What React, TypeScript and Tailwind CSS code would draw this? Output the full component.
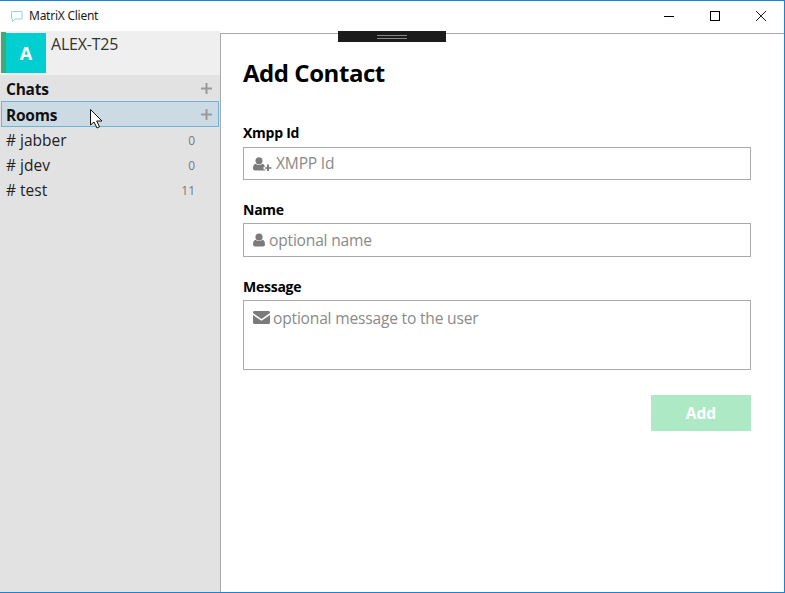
const font = "font-['Open_Sans','Noto_Sans',sans-serif]";

function ChatGlyph() {
  return (
    <svg width="13" height="13" viewBox="0 0 13 13" fill="none" stroke="#8fd3ee" strokeWidth="1">
      <path d="M1.500 1.500h10.500v7.500h-7l-2.500 2.500v-2.500h-1z" />
    </svg>
  );
}

function UserIcon() {
  return (
    <svg width="12" height="14" viewBox="0 0 12 14" fill="#7b7b7b" className="shrink-0">
      <circle cx="6" cy="4" r="3.600" />
      <path d="M2.500 6.800c1 1.300 6 1.300 7 0 1.500.5 2.500 2 2.500 4.500 0 1.500-1 2.200-2 2.200h-8c-1 0-2-.7-2-2.200 0-2.500 1-4 2.500-4.500z" />
    </svg>
  );
}

function UserPlusIcon() {
  return (
    <svg width="19" height="14" viewBox="0 0 19 14" fill="#7b7b7b" className="shrink-0">
      <circle cx="6" cy="3.800" r="3.500" />
      <path d="M2.500 6.800c1 1.300 6 1.300 7 0 1.300.4 2.200 1.500 2.400 3.200h-1.400v2.500h2v1h-10.500c-1 0-2-.7-2-2.200 0-2.500 1-4 2.500-4.500z" />
      <path d="M14 7.500h2v2.700h2.500v1.600h-2.500v2.200h-2v-2.200h-2v-1.600h2z" />
    </svg>
  );
}

function EnvelopeIcon() {
  return (
    <svg width="17" height="13" viewBox="0 0 17 13" fill="#7b7b7b" className="mr-[-1px] shrink-0">
      <path d="M1.500 0h14c.9 0 1.500.6 1.500 1.500v.6l-8.500 5.900-8.500-5.900v-.6c0-.9.6-1.500 1.500-1.500z" />
      <path d="M0 4l8.500 5.800 8.500-5.800v7.500c0 .9-.6 1.500-1.500 1.500h-14c-.9 0-1.500-.6-1.500-1.500z" />
    </svg>
  );
}

function TitleBar() {
  return (
    <div className="flex h-[30px] items-center bg-white">
      <div className="ml-[10px] flex items-center gap-[6px]">
        <ChatGlyph />
        <span className="text-[12px] text-[#1a1a1a] font-['Noto_Sans',sans-serif] tracking-[-0.25px]">MatriX Client</span>
      </div>
      <div className="ml-auto flex items-center">
        <svg width="46" height="30" viewBox="0 0 46 30" stroke="#000" fill="none">
          <path d="M18 15.500h10" />
        </svg>
        <svg width="46" height="30" viewBox="0 0 46 30" stroke="#000" fill="none">
          <rect x="18.500" y="10.500" width="9" height="9" />
        </svg>
        <svg width="46" height="30" viewBox="0 0 46 30" stroke="#222" fill="none">
          <path d="M18 10l10 10M28 10l-10 10" />
        </svg>
      </div>
    </div>
  );
}

function RoomRow({ name, count }: { name: string; count: string }) {
  return (
    <div className="flex h-[25px] items-center pl-[6px] pr-[25px] text-[15.500px] text-[#222]">
      <span className="flex-1 whitespace-pre"># {name}</span>
      <span className="text-[12px] text-[#778]">{count}</span>
    </div>
  );
}

function SectionRow({ label, active }: { label: string; active?: boolean }) {
  return (
    <div
      className={
        active
          ? "flex h-[26px] items-center border border-[#6cb4dc] bg-[#ccdbe3] pl-[4px] pr-[6px]"
          : "flex h-[25px] items-center border border-transparent pl-[4px] pr-[6px]"
      }
    >
      <span className="flex-1 pt-[3px] text-[15.500px] font-bold text-[#111] tracking-[-0.25px]">{label}</span>
      <svg width="11" height="11" viewBox="0 0 11 11" stroke="#9a9a9a" strokeWidth="2" fill="none">
        <path d="M5.500 0v11M0 5.500h11" />
      </svg>
    </div>
  );
}

function Sidebar() {
  return (
    <div className="flex w-[220px] shrink-0 flex-col bg-[#e2e2e2]">
      <div className="flex h-[44px] items-start bg-[#efefef] pt-[1px] pl-[1px]">
        <div className="h-[41px] w-[5px] bg-[#3cab74]" />
        <div className="mt-[1px] flex h-[40px] w-[40px] items-center justify-center bg-[#00ced1] text-[18px] font-bold text-white">
          A
        </div>
        <span className="ml-[5px] text-[16px] leading-[24px] text-[#333] tracking-[-0.2px]">ALEX-T25</span>
      </div>
      <div className="mt-[1px] pl-[1px] pr-[1px]">
        <SectionRow label="Chats" />
        <SectionRow label="Rooms" active />
      </div>
      <div className="mt-[1px]">
        <RoomRow name="jabber" count="0" />
        <RoomRow name="jdev" count="0" />
        <RoomRow name="test" count="11" />
      </div>
    </div>
  );
}

function Field({ label, icon, placeholder, className, textClass }: { label: string; icon: React.ReactNode; placeholder: string; className: string; textClass?: string }) {
  return (
    <div>
      <div className="text-[14px] leading-[18px] font-bold text-black tracking-[-0.25px]">{label}</div>
      <div className={"flex gap-[4px] border border-[#aaa] bg-white pl-[9px] text-[15.600px] text-[#8a8a8a] tracking-[-0.2px] " + className}>
        {icon}
        <span className={textClass}>{placeholder}</span>
      </div>
    </div>
  );
}

export default function App() {
  return (
    <div className={"relative flex h-[593px] w-[785px] flex-col overflow-hidden border-t border-r border-b border-[#1883d7] bg-white " + font}>
      <TitleBar />
      <div className="flex flex-1 overflow-hidden">
        <Sidebar />
        <div className="mt-[2px] flex flex-1 flex-col border-t border-l border-[#aaa] pr-[33px] pl-[22px]">
          <h1 className="mt-[22px] text-[24px] leading-[34px] font-bold text-black tracking-[-0.45px]">Add Contact</h1>
          <div className="mt-[34px] flex flex-col gap-[21px]">
            <Field
              label="Xmpp Id"
              placeholder="XMPP Id"
              className="mt-[5px] h-[33px] items-center"
              icon={<UserPlusIcon />}
            />
            <Field
              label="Name"
              placeholder="optional name"
              className="mt-[4px] h-[34px] items-center"
              textClass="pt-[2px]"
              icon={<UserIcon />}
            />
            <Field
              label="Message"
              placeholder="optional message to the user"
              className="mt-[4px] h-[70px] items-start pt-[5px]"
              textClass="pt-[1px]"
              icon={<span className="mt-[5px] block"><EnvelopeIcon /></span>}
            />
          </div>
          <button className="mt-[25px] ml-auto h-[36px] w-[100px] bg-[#ade9c5] pt-[1px] text-[15.500px] font-bold text-white">Add</button>
        </div>
      </div>
      {/* drag handle, sits over the top edge */}
      <div className="absolute top-[30px] left-[338px] flex h-[11px] w-[108px] items-center justify-center bg-[#1b1b1b]">
        <div className="h-[4px] w-[30px] border-t border-b border-[#888]" />
      </div>
      {/* mouse pointer */}
      <svg className="absolute top-[108px] left-[90px]" width="14" height="21" viewBox="0 0 14 21">
        <path d="M.5.500v15.500l3.500-3 3 6 2.500-1.200-2.800-5.800h5.300z" fill="#fff" stroke="#111" />
      </svg>
    </div>
  );
}
